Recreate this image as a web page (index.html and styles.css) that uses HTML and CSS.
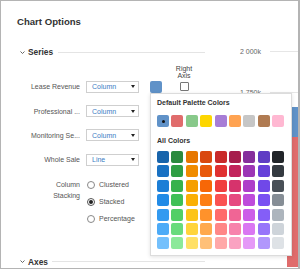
FILE: index.html
```html
<!DOCTYPE html>
<html lang="en">
<head>
    <meta charset="UTF-8">
    <title>Chart Options</title>
    <link rel="stylesheet" href="styles.css">
</head>
<body>
    <div class="dialog">
        <div class="options">
            <h1 class="title">Chart Options</h1>

            <div class="section">
                <svg class="chevron" width="5" height="3" viewBox="0 0 5 3"><path d="M0.5 0.5 L2.5 2.5 L4.5 0.5" fill="none" stroke="#555" stroke-width="0.9"/></svg>
                <span class="section-name">Series</span>
                <span class="section-line"></span>
            </div>

            <div class="axis-head">Right<br>Axis</div>

            <div class="row">
                <span class="label">Lease Revenue</span>
                <div class="select"><span>Column</span><span class="caret"></span></div>
                <span class="swatch" style="background:#6092c8"></span>
                <span class="axis"><span class="checkbox"></span></span>
            </div>
            <div class="row">
                <span class="label">Professional ...</span>
                <div class="select"><span>Column</span><span class="caret"></span></div>
                <span class="swatch" style="background:#e06c6c"></span>
                <span class="axis"><span class="checkbox"></span></span>
            </div>
            <div class="row">
                <span class="label">Monitoring Se...</span>
                <div class="select"><span>Column</span><span class="caret"></span></div>
                <span class="swatch" style="background:#88c98a"></span>
                <span class="axis"><span class="checkbox"></span></span>
            </div>
            <div class="row">
                <span class="label">Whole Sale</span>
                <div class="select"><span>Line</span><span class="caret"></span></div>
                <span class="swatch" style="background:#fdd600"></span>
                <span class="axis"><span class="checkbox"></span></span>
            </div>

            <div class="stacking">
                <span class="label">Column<br>Stacking</span>
                <div class="radios">
                    <label class="radio"><span class="dot"></span>Clustered</label>
                    <label class="radio"><span class="dot checked"></span>Stacked</label>
                    <label class="radio"><span class="dot"></span>Percentage</label>
                </div>
            </div>

            <div class="section section-axes">
                <svg class="chevron" width="5" height="3" viewBox="0 0 5 3"><path d="M0.5 0.5 L2.5 2.5 L4.5 0.5" fill="none" stroke="#555" stroke-width="0.9"/></svg>
                <span class="section-name">Axes</span>
                <span class="section-line"></span>
            </div>
        </div>

        <div class="chart">
            <div class="tick"><span class="tick-label">2 000k</span><span class="tick-line"></span></div>
            <div class="tick"><span class="tick-label">1 750k</span><span class="tick-line"></span></div>
            <div class="bar">
                <div class="bar-part" style="height:30px;background:#6092c8"></div>
                <div class="bar-part" style="height:130px;background:#e06c6c"></div>
            </div>
        </div>

        <div class="palette" id="palette">
            <div class="palette-title">Default Palette Colors</div>
            <div class="swatches" id="default-colors"></div>
            <div class="palette-title all">All Colors</div>
            <div class="swatches grid" id="all-colors"></div>
        </div>
    </div>

    <script>
        const defaults = ['#6092c8', '#e06c6c', '#88c98a', '#fdd600', '#a77dd6', '#ffa352', '#c6c6c6', '#b07b52', '#ffb8d2'];
        const allColors = [
            ['#1864ab', '#2b8a3e', '#e67700', '#d9480f', '#c92a2a', '#a61e4d', '#862e9c', '#5f3dc4', '#212529'],
            ['#1971c2', '#2f9e44', '#f08c00', '#e8590c', '#e03131', '#c2255c', '#9c36b5', '#6741d9', '#343a40'],
            ['#1c7ed6', '#37b24d', '#f59f00', '#f76707', '#f03e3e', '#d6336c', '#ae3ec9', '#7048e8', '#495057'],
            ['#228be6', '#40c057', '#fab005', '#fd7e14', '#fa5252', '#e64980', '#be4bdb', '#7950f2', '#868e96'],
            ['#339af0', '#51cf66', '#fcc419', '#ff922b', '#ff6b6b', '#f06595', '#cc5de8', '#845ef7', '#adb5bd'],
            ['#4dabf7', '#69db7c', '#ffd43b', '#ffa94d', '#ff8787', '#f783ac', '#da77f2', '#9775fa', '#ced4da'],
            ['#74c0fc', '#8ce99a', '#ffe066', '#ffc078', '#ffa8a8', '#faa2c1', '#e599f7', '#b197fc', '#dee2e6']
        ];

        function addSwatch(parent, color, selected) {
            const s = document.createElement('span');
            s.className = selected ? 'chip selected' : 'chip';
            s.style.background = color;
            parent.appendChild(s);
        }

        const defaultBox = document.getElementById('default-colors');
        defaults.forEach((c, i) => addSwatch(defaultBox, c, i === 0));

        const allBox = document.getElementById('all-colors');
        allColors.forEach(row => row.forEach(c => addSwatch(allBox, c, false)));
    </script>
</body>
</html>
```

FILE: styles.css
```css
body {
    margin: 0;
    font-family: "Liberation Sans", Arial, sans-serif;
    background: #fff;
}
.dialog {
    width: 300px;
    height: 269px;
    box-sizing: border-box;
    border: 1px solid #b4b4b4;
    border-right-width: 2px;
    display: flex;
    position: relative;
    overflow: hidden;
    background: #fff;
}
.options {
    width: 204px;
    flex-shrink: 0;
}
.title {
    margin: 15px 0 0 16px;
    font-size: 9.6px;
    line-height: 12px;
    font-weight: bold;
    color: #333;
}
.section {
    display: flex;
    align-items: center;
    height: 10px;
    margin-top: 19px;
    padding-left: 19px;
}
.chevron {
    margin-right: 3px;
}
.section-name {
    font-size: 8.4px;
    font-weight: bold;
    color: #333;
}
.section-line {
    flex: 1;
    height: 1px;
    background: #e4e4e4;
    margin-left: 5px;
}
.axis-head {
    margin: 8px 0 0 172px;
    width: 22px;
    text-align: center;
    font-size: 7px;
    line-height: 7.4px;
    color: #444;
}
.row {
    display: flex;
    align-items: center;
    height: 12px;
    margin-top: 12.3px;
    padding-left: 16px;
}
.axis-head + .row {
    margin-top: 1px;
}
.label {
    width: 63px;
    margin-right: 6px;
    text-align: right;
    font-size: 7px;
    color: #555;
    white-space: nowrap;
}
.select {
    width: 53px;
    height: 12px;
    box-sizing: border-box;
    border: 1px solid #cfcfcf;
    display: flex;
    align-items: center;
    justify-content: space-between;
    padding: 0 3px 0 5px;
    font-size: 7px;
    color: #3b7dc4;
}
.caret {
    width: 0;
    height: 0;
    border-left: 2.5px solid transparent;
    border-right: 2.5px solid transparent;
    border-top: 3px solid #222;
}
.swatch {
    width: 12px;
    height: 12px;
    margin-left: 11px;
    border-radius: 2px;
}
.axis {
    width: 20px;
    margin-left: 12px;
    display: flex;
    justify-content: center;
}
.checkbox {
    width: 9px;
    height: 9px;
    box-sizing: border-box;
    border: 1px solid #777;
    border-radius: 1px;
    background: #fff;
}
.stacking {
    display: flex;
    align-items: flex-start;
    margin-top: 10.6px;
    padding-left: 16px;
}
.stacking .label {
    line-height: 11px;
    margin-top: 3px;
}
.radios {
    display: flex;
    flex-direction: column;
}
.radio {
    display: flex;
    align-items: center;
    height: 17px;
    font-size: 7px;
    color: #555;
}
.dot {
    width: 8px;
    height: 8px;
    box-sizing: border-box;
    border: 1px solid #888;
    border-radius: 50%;
    margin: 0 4px 0 1px;
    display: flex;
    align-items: center;
    justify-content: center;
}
.dot.checked {
    border-color: #555;
}
.dot.checked::before {
    content: '';
    width: 4px;
    height: 4px;
    border-radius: 50%;
    background: #222;
}
.section-axes {
    margin-top: 29.5px;
}
.section-axes .section-line {
    margin-left: 4px;
}
.chart {
    flex: 1;
    position: relative;
    padding-top: 46px;
}
.tick {
    display: flex;
    align-items: center;
    height: 8px;
    margin-bottom: 33px;
}
.tick-label {
    width: 56px;
    text-align: right;
    font-size: 7px;
    color: #666;
}
.tick-line {
    flex: 1;
    height: 1px;
    background: #e6e6e6;
    margin-left: 9px;
}
.bar {
    position: absolute;
    right: 0;
    top: 106px;
    width: 11px;
}
.palette {
    position: absolute;
    left: 149px;
    top: 92px;
    width: 142px;
    box-sizing: border-box;
    padding: 5px 6px 6px;
    background: #fff;
    border: 1px solid #dcdcdc;
    box-shadow: 0 1px 4px rgba(0, 0, 0, 0.12);
}
.palette-title {
    font-size: 7px;
    line-height: 8px;
    font-weight: bold;
    color: #333;
}
.palette-title.all {
    margin-top: 9.7px;
}
.swatches {
    display: flex;
    gap: 2.4px;
    margin-top: 8px;
}
.swatches.grid {
    display: grid;
    grid-template-columns: repeat(9, 12px);
    margin-top: 6.3px;
}
.chip {
    width: 12px;
    height: 12px;
    border-radius: 2px;
    display: flex;
    align-items: center;
    justify-content: center;
}
.chip.selected::before {
    content: '';
    width: 3px;
    height: 3px;
    border-radius: 50%;
    background: #111;
}
```
